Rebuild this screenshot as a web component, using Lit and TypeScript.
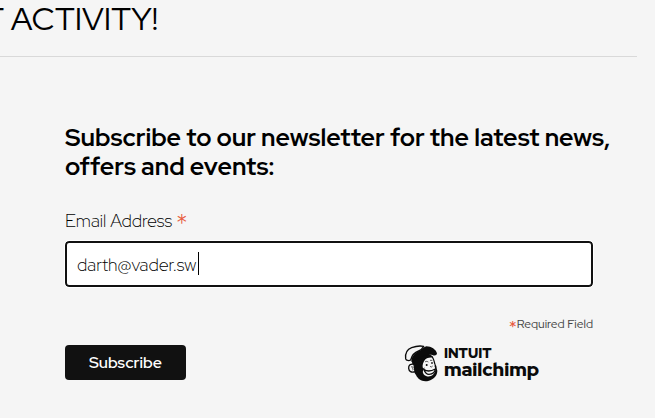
import { LitElement, html, css, svg } from "lit";
import { customElement, state } from "lit/decorators.js";

const mascot = svg`
  <path d="M33 47 C31 60 35 68 38 76 C38 86 39 92 45 99 C52 114 66 121 84 116 C100 111 109 99 109 86 C106 79 108 73 104 68 C102 62 101 53 95 43 C80 30 55 30 33 47Z" fill="#0b0b0b"/>
  <path d="M69 58 C73 48 86 46 93 47 C98 54 98 63 101 69 C99 74 105 79 103 85 C101 98 90 106 77 103 C68 100 62 92 68 82 C63 76 64 67 69 58Z" fill="#f5f5f5"/>
  <path d="M14 50 C12 33 19 22 32 17 C45 12 58 11 68 13 C64 20 62 24 53 27 C41 31 32 42 29 54 C24 57 16 56 14 50Z" fill="#f5f5f5" stroke="#0b0b0b" stroke-width="4" stroke-linejoin="round"/>
  <path d="M50 29 C62 26 66 16 76 13 C91 13 105 23 108 34 C107 41 101 42 94 39 C80 36 62 42 31 60 C32 44 40 34 50 29Z" fill="#0b0b0b"/>
  <path d="M39 67 C29 64 22 70 23 79 C24 88 31 93 42 89Z" fill="#f5f5f5" stroke="#0b0b0b" stroke-width="4"/>
  <path d="M30 75 C36 72 37 77 35 80 C37 82 36 84 34 85" fill="none" stroke="#0b0b0b" stroke-width="2"/>
  <path d="M72 60 C75 57 79 58 82 60 M87 55 L94 55" fill="none" stroke="#0b0b0b" stroke-width="2"/>
  <ellipse cx="77" cy="69" rx="3" ry="3" fill="#0b0b0b"/>
  <ellipse cx="93" cy="63" rx="2.5" ry="3" fill="#0b0b0b"/>
  <path d="M87 73 L91 75 L95 72" fill="none" stroke="#0b0b0b" stroke-width="2"/>
  <path d="M69 83 C79 89 94 86 103 81 C103 90 95 97 84 97 C77 97 72 91 69 83Z" fill="#f5f5f5" stroke="#0b0b0b" stroke-width="4"/>
  <path d="M64 82 C67 83 70 80 70 77" fill="none" stroke="#0b0b0b" stroke-width="2"/>`;

@customElement("app-root")
export class AppRoot extends LitElement {
  @state() private email = "darth@vader.sw";

  static styles = css`
    :host {
      display: block;
      min-height: 100vh;
      background: #f5f5f5;
      color: #000;
      font-family: "Red Hat Display", Inter, "Liberation Sans", sans-serif;
      box-sizing: border-box;
    }
    * { box-sizing: border-box; }
    header {
      height: 57px;
      margin-right: 18px;
      border-bottom: 1px solid #d9d9d9;
    }
    .title {
      display: flex;
      justify-content: flex-end;
      width: 158px;
      margin: 0;
      overflow: hidden;
      white-space: nowrap;
      font-size: 32px;
      font-weight: 400;
      line-height: 38px;
    }
    form {
      padding: 66px 62px 0 65px;
    }
    h2 {
      margin: 0 -40px 0 0;
      font-size: 25px;
      font-weight: 700;
      line-height: 29px;
    }
    label {
      display: block;
      margin-top: 28px;
      font-size: 18px;
      font-weight: 300;
      line-height: 24px;
    }
    .star {
      color: #e85c41;
      font-size: 150%;
      line-height: 0;
      vertical-align: -0.25em;
    }
    .field { position: relative; margin-top: 8px; }
    input {
      display: block;
      width: 100%;
      height: 46px;
      padding: 0 10px;
      border: 2px solid #111;
      border-radius: 4px;
      outline: 1px solid #fff;
      background: #fff;
      color: #000;
      font: inherit;
      font-size: 18px;
      font-weight: 300;
    }
    .caret {
      position: absolute;
      left: 133px;
      top: 11px;
      width: 1px;
      height: 23px;
      background: #000;
    }
    .required {
      margin: 29px 0 0;
      text-align: right;
      font-size: 12px;
      line-height: 16px;
      color: #444;
    }
    .actions {
      display: flex;
      justify-content: space-between;
      align-items: center;
      margin-top: 13px;
      padding-right: 54px;
    }
    button {
      height: 35px;
      padding: 0 24px;
      border: 0;
      border-radius: 4px;
      background: #111;
      color: #fff;
      font: inherit;
      font-size: 16px;
      font-weight: 600;
    }
    .brand {
      display: flex;
      align-items: center;
      gap: 1px;
      color: #0b0b0b;
      text-decoration: none;
    }
    .mascot { width: 42px; height: 42px; margin: -4px 0; }
    .words { display: flex; flex-direction: column; }
    .intuit { font-size: 14px; font-weight: 900; line-height: 15px; }
    .mailchimp { font-size: 19px; font-weight: 900; line-height: 18px; }
  `;

  render() {
    return html`
      <header><h1 class="title">T ACTIVITY!</h1></header>
      <form @submit=${(e: Event) => e.preventDefault()}>
        <h2>Subscribe to our newsletter for the latest news, offers and events:</h2>
        <label for="email">Email Address <span class="star">*</span></label>
        <div class="field">
          <input id="email" type="email" required .value=${this.email}
            @input=${(e: Event) => (this.email = (e.target as HTMLInputElement).value)} />
          <span class="caret"></span>
        </div>
        <p class="required"><span class="star">*</span>Required Field</p>
        <div class="actions">
          <button type="submit">Subscribe</button>
          <a class="brand" href="#mailchimp">
            <svg class="mascot" viewBox="0 0 126 126" aria-hidden="true">${mascot}</svg>
            <span class="words">
              <span class="intuit">INTUIT</span>
              <span class="mailchimp">mailchimp</span>
            </span>
          </a>
        </div>
      </form>
    `;
  }
}
